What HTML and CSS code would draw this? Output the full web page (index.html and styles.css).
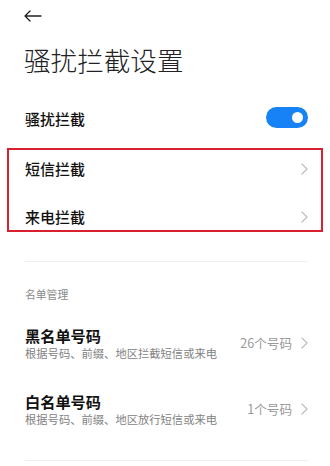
FILE: index.html
```html
<!DOCTYPE html>
<html lang="zh-CN">
<head>
<meta charset="utf-8">
<link rel="stylesheet" href="styles.css">
</head>
<body>
<div class="page">
  <header class="topbar">
    <svg class="back" width="18" height="12" viewBox="0 0 18 12"><path d="M17 6H1.2M6 1L1 6l5 5" fill="none" stroke="#222" stroke-width="1.3" stroke-linecap="round" stroke-linejoin="round"/></svg>
  </header>
  <h1 class="title">骚扰拦截设置</h1>
  <div class="row first">
    <span class="row-label">骚扰拦截</span>
    <span class="switch"><span class="knob"></span></span>
  </div>
  <div class="group">
    <div class="row">
      <span class="row-label">短信拦截</span>
      <svg class="chev" width="7" height="12" viewBox="0 0 7 12"><path d="M1 1l5 5-5 5" fill="none" stroke="#bdbdbd" stroke-width="1.2" stroke-linecap="round" stroke-linejoin="round"/></svg>
    </div>
    <div class="row">
      <span class="row-label">来电拦截</span>
      <svg class="chev" width="7" height="12" viewBox="0 0 7 12"><path d="M1 1l5 5-5 5" fill="none" stroke="#bdbdbd" stroke-width="1.2" stroke-linecap="round" stroke-linejoin="round"/></svg>
    </div>
    <div class="highlight"></div>
  </div>
  <div class="divider"></div>
  <div class="section-label">名单管理</div>
  <div class="item first-item">
    <div class="item-text">
      <div class="item-title">黑名单号码</div>
      <div class="item-sub">根据号码、前缀、地区拦截短信或来电</div>
    </div>
    <div class="item-right">
      <span class="count">26个号码</span>
      <svg class="chev" width="7" height="12" viewBox="0 0 7 12"><path d="M1 1l5 5-5 5" fill="none" stroke="#bdbdbd" stroke-width="1.2" stroke-linecap="round" stroke-linejoin="round"/></svg>
    </div>
  </div>
  <div class="item">
    <div class="item-text">
      <div class="item-title">白名单号码</div>
      <div class="item-sub">根据号码、前缀、地区放行短信或来电</div>
    </div>
    <div class="item-right">
      <span class="count">1个号码</span>
      <svg class="chev" width="7" height="12" viewBox="0 0 7 12"><path d="M1 1l5 5-5 5" fill="none" stroke="#bdbdbd" stroke-width="1.2" stroke-linecap="round" stroke-linejoin="round"/></svg>
    </div>
  </div>
  <div class="divider bottom"></div>
</div>
</body>
</html>
```

FILE: styles.css
```css
* { box-sizing: border-box; }
html, body {
  margin: 0;
  padding: 0;
  background: #fff;
}
body {
  width: 330px;
  height: 466px;
  overflow: hidden;
  font-family: "Noto Sans CJK SC", "Noto Sans", sans-serif;
  color: #111;
}
.page {
  padding: 0 22px 0 25px;
}
.topbar {
  height: 32px;
  display: flex;
  align-items: center;
}
.back {
  display: block;
  margin-left: -1px;
}
.title {
  margin: 10px 0 0 -1px;
  font-size: 26.6px;
  line-height: 36px;
  font-weight: 300;
  color: #222;
  letter-spacing: 0;
}
.row {
  height: 48px;
  display: flex;
  align-items: center;
  justify-content: space-between;
}
.row.first {
  margin-top: 17px;
}
.row-label {
  font-size: 15px;
  line-height: 20px;
  font-weight: 500;
  color: #111;
}
.switch {
  width: 42px;
  height: 21px;
  border-radius: 11px;
  background: #1682f6;
  display: flex;
  align-items: center;
  justify-content: flex-end;
  padding-right: 5px;
  margin-top: -4px;
}
.knob {
  width: 11px;
  height: 11px;
  border-radius: 50%;
  background: #fff;
}
.chev {
  display: block;
  flex: none;
}
.group {
  position: relative;
  margin-top: 2px;
}
.highlight {
  position: absolute;
  left: -18px;
  right: -15px;
  top: 3px;
  height: 84px;
  border: 2.5px solid #d8202e;
  pointer-events: none;
}
.divider {
  height: 1px;
  background: #efefef;
  margin-top: 20px;
}
.divider.bottom {
  margin-top: 18px;
}
.section-label {
  margin-top: 24px;
  font-size: 10.8px;
  line-height: 16px;
  color: #8a8a8a;
}
.item {
  padding: 15px 0;
  display: flex;
  align-items: center;
  justify-content: space-between;
}
.first-item {
  margin-top: 8px;
}
.item-title {
  font-size: 15.2px;
  line-height: 20px;
  font-weight: 700;
  color: #111;
}
.item-sub {
  font-size: 11.3px;
  line-height: 16px;
  color: #828282;
}
.item-right {
  display: flex;
  align-items: center;
  gap: 9px;
}
.count {
  font-size: 12.6px;
  line-height: 16px;
  color: #999;
}
```
